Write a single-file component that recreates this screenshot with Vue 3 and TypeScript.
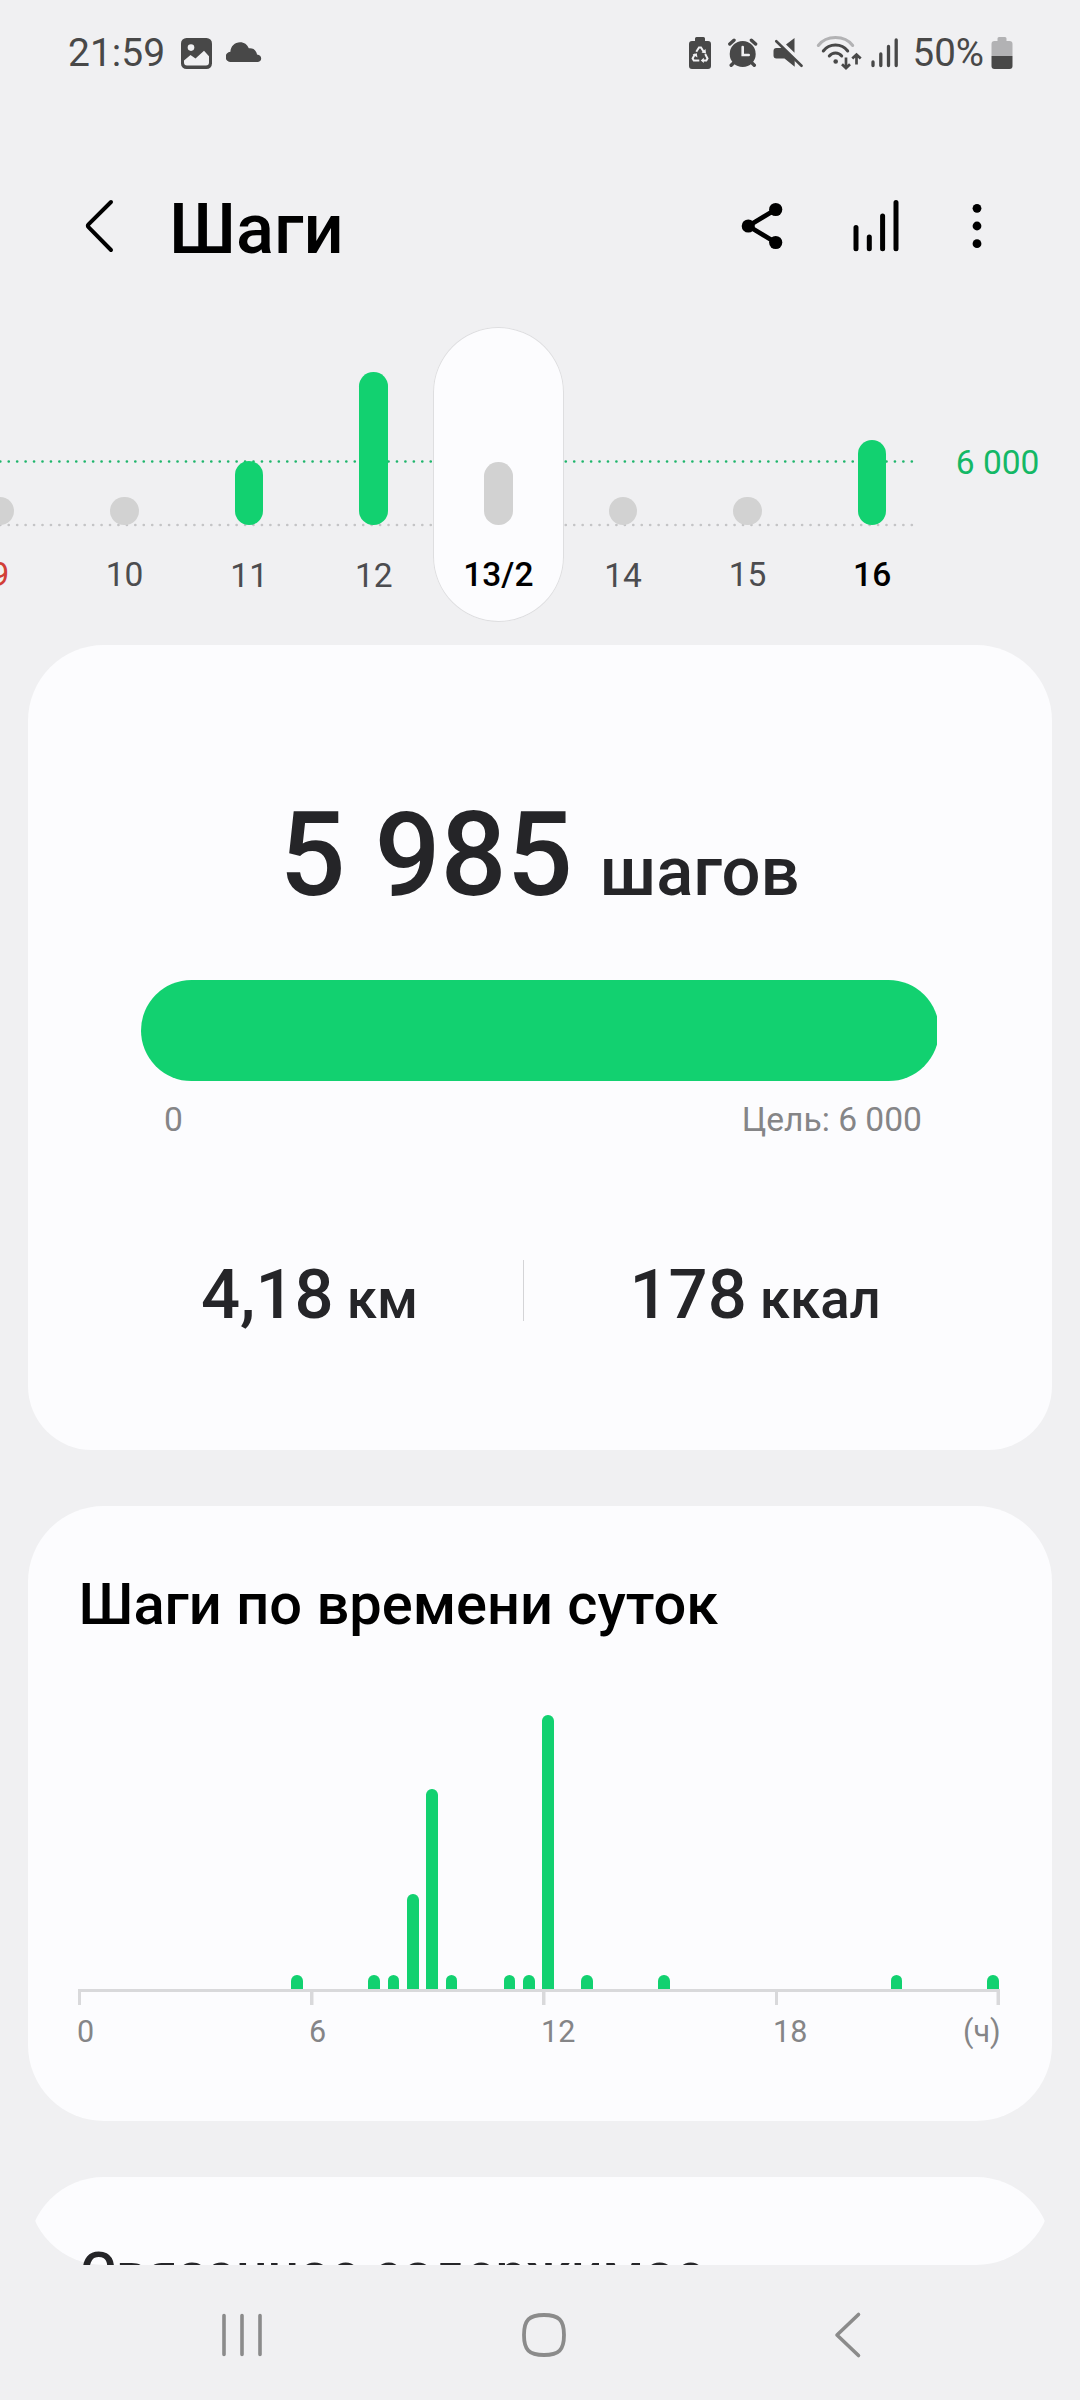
<script setup lang="ts">
interface Day {
  label: string
  height: number
  kind: 'reached' | 'missed'
  tone?: 'sunday' | 'today' | 'selected'
  low?: boolean
}

const days: Day[] = [
  { label: '9', height: 28.5, kind: 'missed', tone: 'sunday' },
  { label: '10', height: 28.5, kind: 'missed' },
  { label: '11', height: 64.5, kind: 'reached', low: true },
  { label: '12', height: 153, kind: 'reached', low: true },
  { label: '13/2', height: 63.5, kind: 'missed', tone: 'selected' },
  { label: '14', height: 28.5, kind: 'missed', low: true },
  { label: '15', height: 28.5, kind: 'missed' },
  { label: '16', height: 85.5, kind: 'reached', tone: 'today' },
]

// half-hour slots of the day -> bar height
const activity: Record<number, number> = {
  11: 14, 15: 14, 16: 14, 17: 95.5, 18: 200, 19: 14,
  22: 14, 23: 14, 24: 274, 26: 14, 30: 14, 42: 14, 47: 14,
}
const slots: number[] = Array.from({ length: 48 }, (_, i) => activity[i] ?? 0)

const steps = 5985
const goal = 6000
const progress = `${(steps / goal) * 100}%`
</script>

<template>
  <div class="screen">
    <div class="status">
      <span class="clock">21:59</span>
      <svg class="st-image" width="32" height="40" viewBox="181 33 32 40">
        <path fill="#484848" fill-rule="evenodd" d="M186.500 38h20a5.500 5.500 0 0 1 5.500 5.500v20a5.500 5.500 0 0 1-5.500 5.500h-20a5.500 5.500 0 0 1-5.500-5.500v-20a5.500 5.500 0 0 1 5.500-5.500z" />
        <circle cx="191" cy="47.600" r="3.300" fill="#f0f0f2" />
        <path fill="#f0f0f2" d="M184 60.500l6.500-5.500 5 3.500 8.500-7.800 5 5.500v6.300q0 3-3 3h-19q-3 0-3-3z" />
      </svg>
      <svg class="st-cloud" width="36" height="40" viewBox="226 33 36 40">
        <path fill="#484848" d="M231 62a5 5 0 0 1-.6-10.200c.2-5.400 4.400-9.500 9.700-9.500 4.100 0 7.200 2.300 8.700 6 4.300-.6 7.700 2 8.200 6.300 2.600.4 4.200 1.800 4.200 4 0 2-1.600 3.400-3.800 3.400z" />
      </svg>
      <svg class="st-eco" width="24" height="40" viewBox="688 33 24 40">
        <path fill="#484848" d="M696.500 37h7q1.500 0 1.500 1.500V41h3q3 0 3 3v22q0 3-3 3h-16q-3 0-3-3V44q0-3 3-3h3v-2.500q0-1.500 1.500-1.500z" />
        <g fill="none" stroke="#f0f0f2" stroke-width="2">
          <path d="M696.300 51.800l2.700-4.300h2l2.800 4.500" />
          <path d="M705.200 54l2.300 4.500-1.200 2h-3.300" />
          <path d="M699.300 60.500h-5.500l-1.200-2 2.400-4.500" />
        </g>
        <path fill="#f0f0f2" d="M701.500 52.500l4.500 1-.5-4.500zM703.800 57.800v5.200l-3-2.600zM692.500 54.500l4.300-1.200.6 4.200z" />
      </svg>
      <svg class="st-alarm" width="30" height="40" viewBox="728 33 30 40">
        <circle cx="742.700" cy="54" r="13" fill="#484848" />
        <g stroke="#484848" stroke-width="3.400" stroke-linecap="round" fill="none">
          <path d="M729.800 44l4.200-3.800M751.400 40.200l4.200 3.800M733.500 63l-2.300 2.300M752 63l2.300 2.300" />
        </g>
        <path d="M742.700 47v8h6" fill="none" stroke="#f0f0f2" stroke-width="2.600" stroke-linecap="round" />
      </svg>
      <svg class="st-mute" width="30" height="40" viewBox="772.500 33 30 40">
        <path fill="#484848" d="M785.500 44.500l8.500-6.500v14.800zM782.300 48l11.900 11.700v7L784 58.500h-8q-3 0-3-3V51q0-3 3-3z" />
        <path d="M775.800 41.200L801 65.800" stroke="#484848" stroke-width="2.600" stroke-linecap="round" />
      </svg>
      <svg class="st-wifi" width="46" height="40" viewBox="816 33 46 40">
        <g fill="none" stroke="#484848" stroke-width="3" stroke-linecap="round">
          <path d="M818.300 45.500q6-8 17.200-8t17.200 8" stroke="#b2b2b4" />
          <path d="M823.300 51q4.500-6 12.200-6t12.200 6" />
          <path d="M829.300 56q2.500-3 6.200-3t6.200 3" />
        </g>
        <circle cx="835.700" cy="61.500" r="2.300" fill="#484848" />
        <path d="M846 57.500v10M842 64.300l4 3.900 4-3.900M856.500 64.500v-9M852.300 58.500l4.200-4 4.200 4" fill="none" stroke="#484848" stroke-width="2.700" />
      </svg>
      <svg class="st-signal" width="28" height="40" viewBox="871 33 28 40">
        <path d="M873 62v3.500M880.800 54v11.500M888.500 46.500v19M896.200 40v25.500" stroke="#484848" stroke-width="3.300" stroke-linecap="round" />
      </svg>
      <span class="percent">50%</span>
      <svg class="st-battery" width="22" height="40" viewBox="990.500 33 22 40">
        <path fill="#b2b2b4" d="M998.500 37h6q1.500 0 1.500 1.500V41h3q3 0 3 3v12h-21V44q0-3 3-3h3v-2.500q0-1.500 1.500-1.500z" />
        <path fill="#484848" d="M991 56h21v10q0 3-3 3h-15q-3 0-3-3z" />
      </svg>
    </div>

    <header class="appbar">
      <svg class="back" width="32" height="60" viewBox="84 199 32 60">
        <path d="M111 202L88.500 224.300q-1.400 1.400 0 2.800L111 250" fill="none" stroke="#000" stroke-width="4" stroke-linecap="round" />
      </svg>
      <h1>Шаги</h1>
      <svg class="share" width="44" height="60" viewBox="740 199 44 60">
        <path d="M775.700 209.500L748.300 226l27.400 16.500" fill="none" stroke="#000" stroke-width="4.600" />
        <circle cx="748.300" cy="226" r="6.600" /><circle cx="775.700" cy="209.500" r="6.600" /><circle cx="775.700" cy="242.500" r="6.600" />
      </svg>
      <svg class="trend" width="48" height="60" viewBox="852 199 48 60">
        <path d="M856 227.500v21.300M869.300 237v11.800M882.600 216v32.800M896 202.500v46.300" stroke="#000" stroke-width="5" stroke-linecap="round" />
      </svg>
      <svg class="more" width="12" height="60" viewBox="970.700 199 12 60">
        <circle cx="976.700" cy="208.300" r="4.400" /><circle cx="976.700" cy="226" r="4.400" /><circle cx="976.700" cy="243.700" r="4.400" />
      </svg>
    </header>

    <section class="week">
      <svg class="guides" width="920" height="80" viewBox="0 0 920 80">
        <path d="M.3 7.500H913" stroke="#1fb56c" />
        <path d="M.3 71H913" stroke="#c4c4c6" />
      </svg>
      <div class="days">
        <div v-for="d in days" :key="d.label" class="day" :class="d.tone">
          <div class="plot">
            <i :class="d.kind" :style="{ height: d.height + 'px' }"></i>
          </div>
          <span :class="{ low: d.low }">{{ d.label }}</span>
        </div>
      </div>
      <span class="target">6 000</span>
    </section>

    <section class="card summary">
      <div class="total"><b>5 985</b><span>шагов</span></div>
      <div class="track"><div class="fill" :style="{ width: progress }"></div></div>
      <div class="range"><span>0</span><span>Цель: 6 000</span></div>
      <div class="stats">
        <div class="stat distance"><b>4,18</b><span>км</span></div>
        <div class="rule"></div>
        <div class="stat energy"><b>178</b><span>ккал</span></div>
      </div>
    </section>

    <section class="card hourly">
      <h2>Шаги по времени суток</h2>
      <div class="bars">
        <div v-for="(h, i) in slots" :key="i" class="slot">
          <i v-if="h" :style="{ height: h + 'px' }"></i>
        </div>
      </div>
      <svg class="axis" width="922" height="16" viewBox="0 0 922 16">
        <path d="M0 0h922v16h-3.500V3H700v13h-3V3H467.500v13h-3.500V3H235.500v13h-3.500V3H3v13H0z" fill="#d9d9db" />
      </svg>
      <div class="hours"><span>0</span><span>6</span><span>12</span><span>18</span><span class="unit">(ч)</span></div>
    </section>

    <section class="related">
      <div class="mask"><div class="sheet"></div></div>
      <h2>Связанное содержимое</h2>
    </section>

    <nav class="keys">
      <svg width="46" height="50" viewBox="219 2310 46 50">
        <path d="M224 2315.500v39M242 2315.500v39M260 2315.500v39" stroke="#8b8b8b" stroke-width="3.600" stroke-linecap="round" />
      </svg>
      <svg class="home" width="50" height="50" viewBox="519 2310 50 50">
        <path d="M544 2315c15 0 20 5 20 20s-5 20-20 20-20-5-20-20 5-20 20-20z" fill="none" stroke="#8b8b8b" stroke-width="3.800" />
      </svg>
      <svg class="return" width="32" height="50" viewBox="832 2310 32 50">
        <path d="M858.500 2314.500L837 2335l21.500 20.500" fill="none" stroke="#8b8b8b" stroke-width="3.600" stroke-linecap="round" stroke-linejoin="round" />
      </svg>
    </nav>
  </div>
</template>

<style>
body {
  background: #f0f0f2;
}
</style>

<style scoped>
.screen {
  width: 1080px;
  height: 2400px;
  overflow: hidden;
  background: #f0f0f2;
  font-family: Roboto, "Noto Sans", sans-serif;
  color: #252528;
}
svg {
  display: block;
  flex: none;
}
h1,
h2 {
  margin: 0;
  font-weight: 500;
  color: #000;
  white-space: nowrap;
}
b {
  font-weight: 500;
}

.status {
  display: flex;
  align-items: center;
  height: 62px;
  padding: 22px 0 0 68px;
  font-size: 39px;
  line-height: 62px;
  color: #484848;
}
.clock {
  width: 113px;
}
.st-cloud {
  margin-left: 13px;
}
.st-eco {
  margin-left: 426px;
}
.st-alarm {
  margin-left: 16px;
}
.st-mute {
  margin-left: 14.500px;
}
.st-wifi {
  margin-left: 13.500px;
}
.st-signal {
  margin-left: 9px;
}
.percent {
  width: 78px;
  margin-left: 13.500px;
  font-size: 38.500px;
  white-space: nowrap;
}

.appbar {
  display: flex;
  align-items: center;
  height: 100px;
  margin-top: 95px;
  padding-left: 84px;
}
.appbar h1 {
  width: 571px;
  margin-left: 53px;
  font-size: 70.500px;
  line-height: 100px;
}
.trend {
  margin-left: 68px;
}
.more {
  margin-left: 70.700px;
}

.week {
  position: relative;
  display: flex;
  height: 296px;
  margin-top: 48px;
  font-size: 33.500px;
  line-height: 40px;
}
.guides {
  position: absolute;
  left: 0;
  top: 127px;
  fill: none;
  stroke-width: 2.700px;
  stroke-linecap: round;
  stroke-dasharray: 0 8.440;
}
.days {
  position: relative;
  display: flex;
  flex: none;
  margin-left: -62.300px;
  font-kerning: none;
}
.day {
  display: flex;
  flex-direction: column;
  align-items: center;
  width: 124.600px;
  height: 295px;
  color: #4c4c4f;
}
.plot {
  display: flex;
  align-items: flex-end;
  height: 198px;
  margin-bottom: 30px;
}
.plot i {
  width: 28.600px;
  border-radius: 14.300px;
}
.reached {
  background: #12d170;
}
.missed {
  background: #d2d2d2;
}
.low {
  padding-top: 1px;
}
.sunday {
  color: #d23f37;
}
.today {
  color: #000;
  font-weight: 500;
}
.selected {
  width: 131.600px;
  margin: 0 -3.500px;
  border-radius: 66px;
  background: #fcfcfe;
  box-shadow: inset 0 0 0 1px #dedee0;
  color: #000;
  font-weight: 500;
}
.target {
  margin: 116px 0 0 21.300px;
  color: #14b866;
  white-space: nowrap;
}

.card {
  box-sizing: border-box;
  margin: 0 28px;
  border-radius: 76px;
  background: #fcfcfe;
}
.summary {
  height: 805px;
  margin-top: 22px;
  padding-top: 140px;
  border-radius: 76px 76px 64px 64px;
}
.total {
  display: flex;
  align-items: baseline;
  height: 140px;
  padding-left: 251.500px;
  line-height: 140px;
}
.total b {
  font-size: 116.300px;
}
.total span {
  margin-left: 27px;
  font-size: 68.800px;
  font-weight: 500;
}
.track {
  width: 798px;
  height: 101px;
  margin: 55px auto 0;
  border-radius: 50.500px;
  overflow: hidden;
}
.fill {
  height: 101px;
  background: #12d170;
}
.range {
  display: flex;
  justify-content: space-between;
  margin: 19px 130px 0 136px;
  font-size: 33.600px;
  line-height: 40px;
  color: #858587;
}
.stats {
  display: flex;
  align-items: flex-start;
  margin-top: 119px;
}
.stat {
  display: flex;
  align-items: baseline;
  margin-top: 2px;
  line-height: 68px;
}
.stat b {
  font-size: 68.800px;
}
.stat span {
  margin-left: 13px;
  font-size: 54.600px;
  font-weight: 500;
}
.distance {
  width: 322px;
  padding-left: 173px;
}
.rule {
  width: 1px;
  height: 61px;
  margin-top: 1px;
  background: #d4d4d7;
}
.energy {
  padding-left: 105.500px;
}

.hourly {
  height: 615px;
  margin-top: 56px;
  padding-top: 63px;
}
.hourly h2 {
  padding-left: 50.500px;
  font-size: 57.800px;
  line-height: 70px;
}
.bars {
  display: flex;
  align-items: flex-end;
  height: 350px;
  margin-left: 46.300px;
}
.slot {
  flex: none;
  display: flex;
  justify-content: center;
  width: 19.350px;
}
.slot i {
  width: 11.600px;
  border-radius: 5.800px 5.800px 0 0;
  background: #12d170;
}
.axis {
  margin-left: 50px;
}
.hours {
  display: flex;
  width: 922px;
  margin: 9px 0 0 49px;
  font-size: 30.500px;
  line-height: 36px;
  color: #858587;
}
.hours span {
  flex: none;
  width: 232px;
}
.hours .unit {
  width: auto;
  margin-left: -42px;
}

.related {
  display: grid;
  height: 88px;
  margin: 56px 28px 0;
  overflow: hidden;
}
.mask {
  grid-area: 1 / 1;
  height: 88px;
  border-radius: 0 0 76px 76px;
  overflow: hidden;
}
.sheet {
  height: 400px;
  border-radius: 76px;
  background: #fcfcfe;
}
.related h2 {
  grid-area: 1 / 1;
  padding: 61px 0 0 52px;
  font-size: 55.200px;
  line-height: 70px;
  color: #252528;
}

.keys {
  display: flex;
  margin: 45px 0 0 219px;
}
.home {
  margin-left: 254px;
}
.return {
  margin-left: 263px;
}
</style>
